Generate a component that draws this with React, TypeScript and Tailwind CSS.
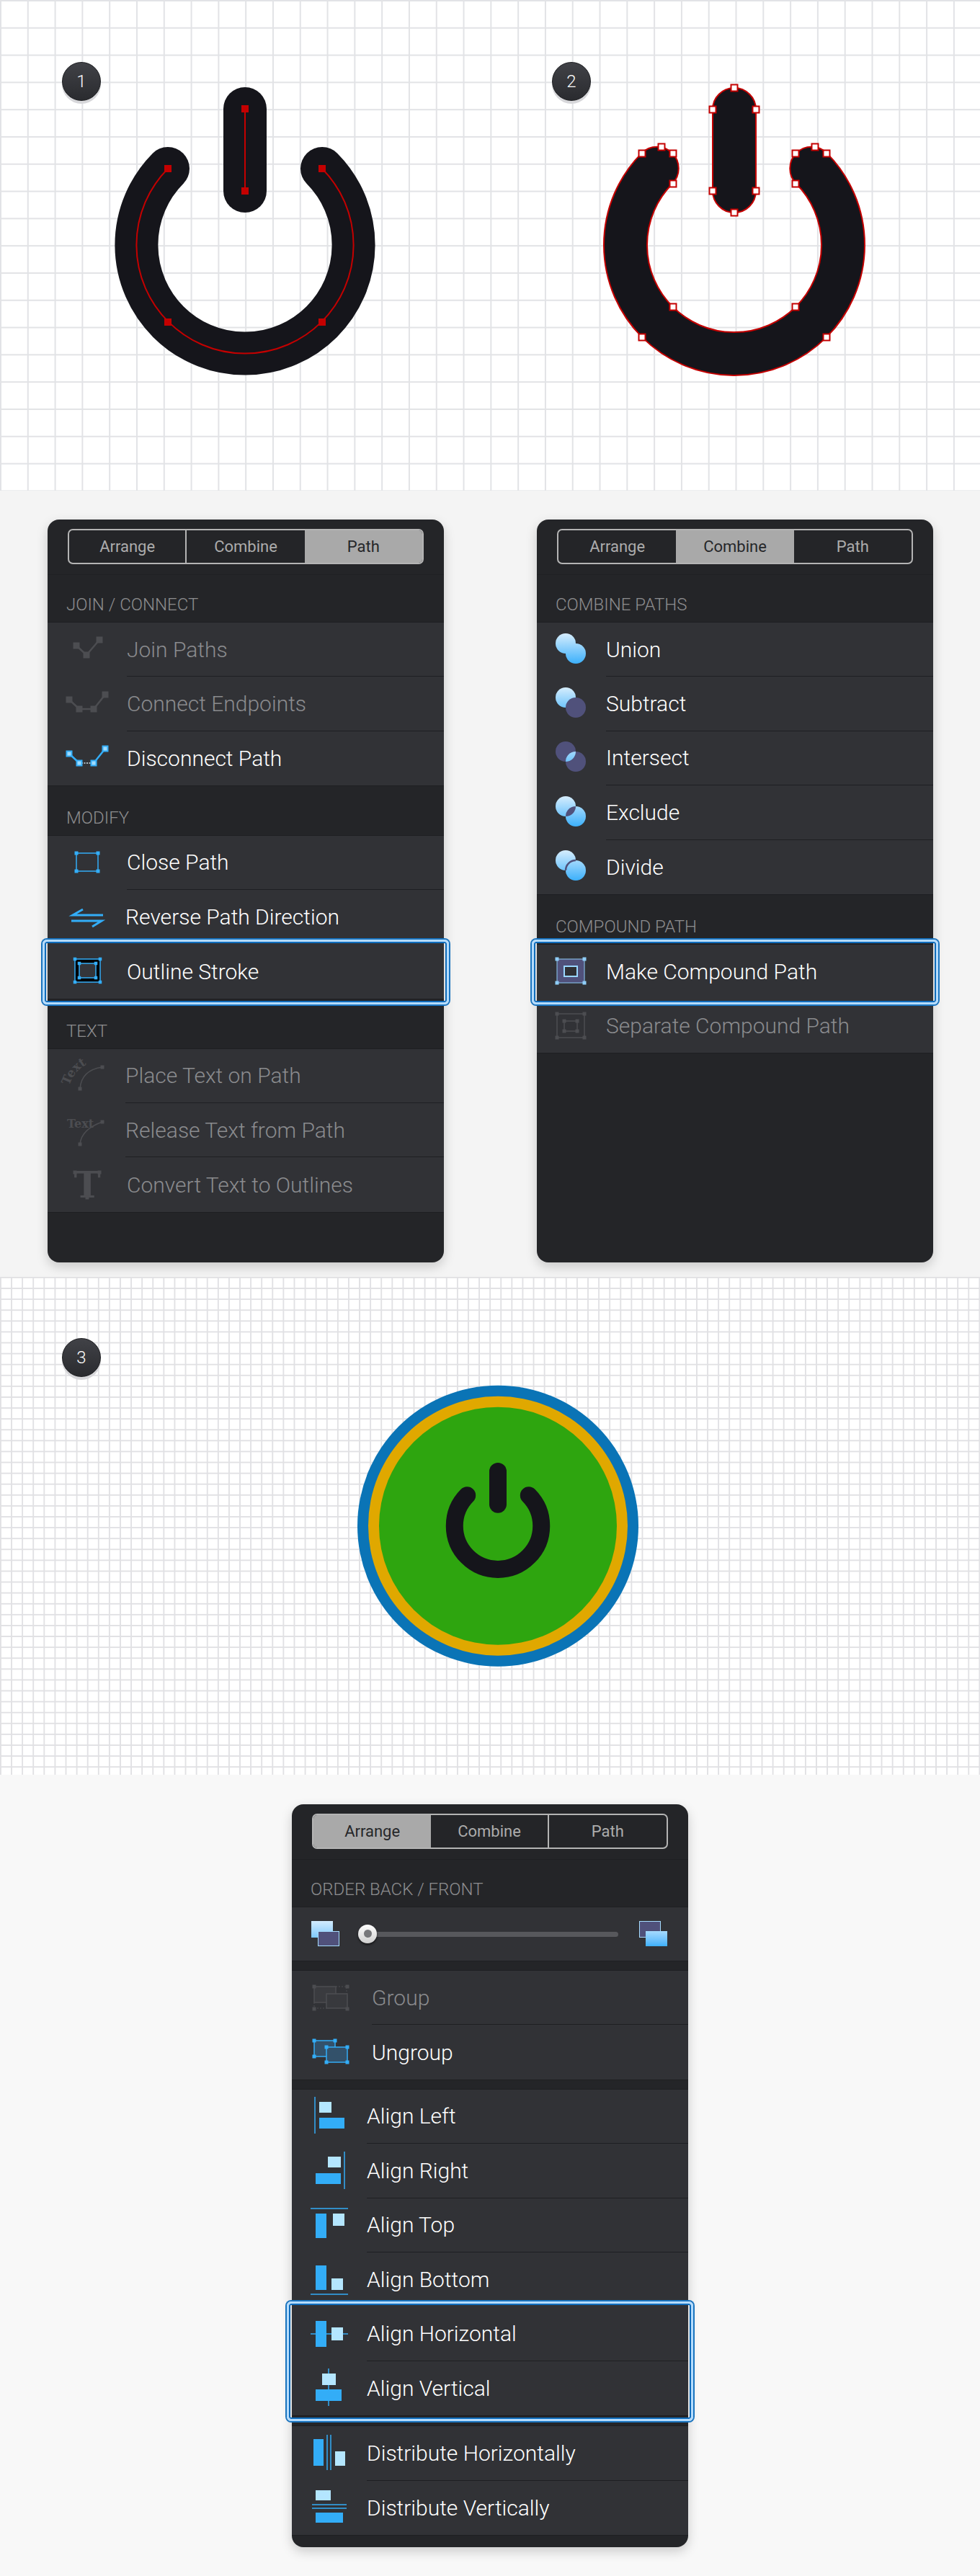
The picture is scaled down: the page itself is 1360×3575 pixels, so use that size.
import type { ReactNode } from 'react';

const BLUE = '#33adf7';
const PALE = '#b4e6ff';
const DIM = '#4c4d51';
const PURPLE = '#50517b';

function Sq({ x, y, s = 5, fill }: { x: number; y: number; s?: number; fill: string }) {
  return <rect x={x - s / 2} y={y - s / 2} width={s} height={s} fill={fill} />;
}

function Icon({ children }: { children: ReactNode }) {
  return (
    <svg viewBox="-36 -28 72 56" className="w-[72px] h-[56px] overflow-visible">
      {children}
    </svg>
  );
}

function Defs() {
  return (
    <svg className="absolute w-0 h-0">
      <defs>
        <linearGradient id="light" gradientUnits="userSpaceOnUse" x1="0" y1="-23" x2="0" y2="19">
          <stop offset="0" stopColor="#d6edfd" />
          <stop offset="1" stopColor="#3cb0fb" />
        </linearGradient>
        <clipPath id="clipA">
          <circle cx="-7" cy="-9" r="14" />
        </clipPath>
      </defs>
    </svg>
  );
}

function JoinIcon() {
  return (
    <Icon>
      <path d="M-15 -6 L-1 7 L17 -14" fill="none" stroke={DIM} strokeWidth="2.5" />
      <Sq x={-15} y={-6} s={9} fill={DIM} />
      <Sq x={-1} y={7} s={9} fill={DIM} />
      <Sq x={17} y={-14} s={9} fill={DIM} />
    </Icon>
  );
}

function ConnectIcon() {
  return (
    <Icon>
      <path d="M-25 -6 L-11 7 H9 L25 -13" fill="none" stroke={DIM} strokeWidth="2.5" />
      <Sq x={-25} y={-6} s={9} fill={DIM} />
      <Sq x={-11} y={7} s={9} fill={DIM} />
      <Sq x={9} y={7} s={9} fill={DIM} />
      <Sq x={25} y={-13} s={9} fill={DIM} />
    </Icon>
  );
}

function DisconnectIcon() {
  return (
    <Icon>
      <path d="M-25 -6 L-11 7 M9 7 L25 -13" fill="none" stroke={BLUE} strokeWidth="2.5" />
      <path d="M-8 7 H6" fill="none" stroke="#d5e7f2" strokeWidth="1.5" strokeDasharray="2 1.5" />
      {[[-25, -6], [-11, 7], [9, 7], [25, -13]].map(([x, y]) => (
        <g key={x}>
          <Sq x={x} y={y} s={9} fill={BLUE} />
          <Sq x={x} y={y} s={5} fill="#9fdcff" />
        </g>
      ))}
    </Icon>
  );
}

function ClosePathIcon() {
  return (
    <Icon>
      <rect x="-15" y="-13" width="30" height="25" fill="none" stroke={BLUE} strokeWidth="1.5" />
      <Sq x={-15} y={-13} fill={BLUE} />
      <Sq x={15} y={-13} fill={BLUE} />
      <Sq x={-15} y={12} fill={BLUE} />
      <Sq x={15} y={12} fill={BLUE} />
    </Icon>
  );
}

function ReverseIcon() {
  return (
    <Icon>
      <path d="M22 -3 H-20 L-6 -11 M-22 5 H20 L7 13" fill="none" stroke={BLUE} strokeWidth="3" />
    </Icon>
  );
}

function OutlineIcon() {
  return (
    <Icon>
      <rect x="-17" y="-17" width="35" height="32" fill="#000" stroke={BLUE} strokeWidth="1.5" />
      <rect x="-11" y="-11" width="23" height="20" fill="#34353a" stroke={BLUE} strokeWidth="1.5" />
      {[[-17, -17], [18, -17], [-17, 15], [18, 15], [-11, -11], [12, -11], [-11, 9], [12, 9]].map(([x, y]) => (
        <Sq key={`${x}${y}`} x={x} y={y} s={4.5} fill={BLUE} />
      ))}
    </Icon>
  );
}

function PlaceTextIcon() {
  return (
    <Icon>
      <path id="placeCurve" d="M-25 14 Q-17 -12 10 -20" fill="none" />
      <text fontFamily="DejaVu Serif" fontWeight="700" fontSize="17" fill={DIM}>
        <textPath href="#placeCurve">Text</textPath>
      </text>
      <path d="M-10 18 Q-8 -8 21 -12" fill="none" stroke={DIM} strokeWidth="1.5" />
      <Sq x={-10} y={18} fill={DIM} />
      <Sq x={21} y={-12} fill={DIM} />
    </Icon>
  );
}

function ReleaseTextIcon() {
  return (
    <Icon>
      <text x="-28" y="-4" fontFamily="DejaVu Serif" fontWeight="700" fontSize="16" fill={DIM}>
        Text
      </text>
      <path d="M-10 19 Q-8 -2 21 -12" fill="none" stroke={DIM} strokeWidth="1.5" />
      <Sq x={-10} y={19} fill={DIM} />
      <Sq x={21} y={-12} fill={DIM} />
    </Icon>
  );
}

function ConvertTextIcon() {
  return (
    <Icon>
      <text x="0" y="18" textAnchor="middle" fontFamily="DejaVu Serif" fontWeight="700" fontSize="50" fill={DIM}>
        T
      </text>
      <Sq x={-17} y={-17} fill={DIM} />
      <Sq x={17} y={-17} fill={DIM} />
      <Sq x={0} y={18} fill={DIM} />
    </Icon>
  );
}

function Circles({ a, b, lens, stroke }: { a: string; b: string; lens?: string; stroke?: string }) {
  return (
    <Icon>
      <circle cx="-7" cy="-9" r="14" fill={a} />
      <circle cx="7" cy="5" r="14" fill={b} />
      {lens && <circle cx="7" cy="5" r="14" fill={lens} stroke={stroke} strokeWidth="2.5" clipPath="url(#clipA)" />}
    </Icon>
  );
}

function CompoundIcon() {
  return (
    <Icon>
      <rect x="-19" y="-17" width="38" height="33" fill={PURPLE} stroke="#8fcdf8" strokeWidth="1" />
      <rect x="-9" y="-7" width="18" height="14" fill="#2f3034" stroke="#9ad6ff" strokeWidth="2" />
      {[[-19, -17], [19, -17], [-19, 16], [19, 16]].map(([x, y]) => (
        <Sq key={`${x}${y}`} x={x} y={y} fill="#8fcdf8" />
      ))}
    </Icon>
  );
}

function SeparateIcon() {
  return (
    <Icon>
      <rect x="-19" y="-17" width="38" height="33" fill="none" stroke={DIM} strokeWidth="1.5" />
      <rect x="-9" y="-7" width="18" height="14" fill="none" stroke={DIM} strokeWidth="1.5" />
      {[[-19, -17], [19, -17], [-19, 16], [19, 16], [-9, -7], [9, -7], [-9, 7], [9, 7]].map(([x, y]) => (
        <Sq key={`${x}${y}`} x={x} y={y} fill={DIM} />
      ))}
    </Icon>
  );
}

function GroupIcon() {
  return (
    <Icon>
      <rect x="-23" y="-16" width="30" height="22" fill="#3a3b3f" stroke={DIM} strokeWidth="1.5" />
      <rect x="-6" y="-6" width="29" height="20" fill="#38393d" stroke={DIM} strokeWidth="1.5" />
      <path d="M7 -16 H22 V-6 M-23 6 V14 H-6" fill="none" stroke={DIM} strokeWidth="1" strokeDasharray="2 2" />
      {[[-23, -16], [23, -16], [-23, 15], [23, 15]].map(([x, y]) => (
        <Sq key={`${x}${y}`} x={x} y={y} fill={DIM} />
      ))}
    </Icon>
  );
}

function UngroupIcon() {
  const nodes = [[-23, -16], [6, -16], [-23, 6], [-6, -7], [23, -7], [-6, 14], [23, 14]];
  return (
    <Icon>
      <rect x="-23" y="-16" width="29" height="22" fill="#33516a" stroke={BLUE} strokeWidth="1.5" />
      <rect x="-6" y="-7" width="29" height="21" fill="#33516a" stroke={BLUE} strokeWidth="1.5" />
      {nodes.map(([x, y]) => (
        <Sq key={`${x}${y}`} x={x} y={y} fill={BLUE} />
      ))}
    </Icon>
  );
}

function AlignIcon({ lines, dark, pale }: { lines: number[][]; dark: number[]; pale: number[] }) {
  return (
    <Icon>
      {lines.map(([x1, y1, x2, y2]) => (
        <line key={`${x1}${y1}`} x1={x1} y1={y1} x2={x2} y2={y2} stroke={BLUE} strokeWidth="1.5" />
      ))}
      <rect x={dark[0]} y={dark[1]} width={dark[2] - dark[0]} height={dark[3] - dark[1]} fill={BLUE} />
      <rect x={pale[0]} y={pale[1]} width={pale[2] - pale[0]} height={pale[3] - pale[1]} fill={PALE} />
    </Icon>
  );
}

function Tabs({ active }: { active: number }) {
  const names = ['Arrange', 'Combine', 'Path'];
  return (
    <div className="grid grid-cols-3 h-[49px] rounded-[7px] border-2 border-[#b4b4b4] overflow-hidden">
      {names.map((name, i) => (
        <div
          key={name}
          className={`flex items-center justify-center text-[22px] ${
            i === active ? 'bg-[#a9a9a9] text-[#26272a]' : 'text-[#acacac]'
          } ${i < 2 && i !== active && i + 1 !== active ? 'border-r-2 border-[#b4b4b4]' : ''}`}
        >
          {name}
        </div>
      ))}
    </div>
  );
}

function Heading({ children, tall }: { children: string; tall?: boolean }) {
  return (
    <div className={`flex items-end pl-[26px] pb-[11px] text-[24px] leading-[28px] font-light text-[#8d8d8f] ${tall ? 'h-[69.6px]' : 'h-[66px]'}`}>
      {children}
    </div>
  );
}

function Rows({ children }: { children: ReactNode }) {
  return <div className="bg-[#313236] shadow-[0_-1px_0_#1e1f22,0_1px_0_#1e1f22]">{children}</div>;
}

function Row({
  icon,
  label,
  off,
  last,
  col,
}: {
  icon: ReactNode;
  label: string;
  off?: boolean;
  last?: boolean;
  col: string;
}) {
  return (
    <div className="flex h-[75.4px]">
      <div className={`flex items-center shrink-0 ${col}`}>{icon}</div>
      <div
        className={`flex flex-1 items-center text-[30px] font-light ${off ? 'text-[#8a8b8e]' : 'text-white'} ${
          last ? '' : 'border-b border-[#1e1f22]'
        }`}
      >
        {label}
      </div>
    </div>
  );
}

function Highlight({ children }: { children: ReactNode }) {
  return (
    <div className="relative">
      {children}
      <div className="absolute -left-[7px] -right-[7px] -top-[7px] -bottom-[8px] rounded-[6px] border-[3px] border-[#b5dcfd] shadow-[0_0_0_2px_#1a74bf,inset_0_0_0_2px_#0f6cbb]" />
    </div>
  );
}

function Panel({ active, children }: { active: number; children: ReactNode }) {
  return (
    <div className="w-[550px] h-[1031px] rounded-[16px] bg-[#242528] shadow-[0_6px_16px_rgba(0,0,0,0.18)]">
      <div className="px-[28px] pt-[13px] pb-[14px] border-b border-[#1f2023]">
        <Tabs active={active} />
      </div>
      {children}
    </div>
  );
}

function Badge({ n, className }: { n: number; className: string }) {
  return (
    <div
      className={`absolute flex items-center justify-center w-[54px] h-[54px] rounded-full border border-[#1c1d20] bg-gradient-to-b from-[#414247] to-[#2a2b2f] text-[24px] font-light text-white shadow-[0_4px_0_#d7d7da] ${className}`}
    >
      {n}
    </div>
  );
}

function PowerStrokes() {
  return (
    <g fill="none" stroke="#15151b" strokeWidth="60" strokeLinecap="round">
      <path d="M-107 -106 A150.6 150.6 0 1 0 107 -106" />
      <path d="M0 -189 V-75" />
    </g>
  );
}

function PowerOne() {
  const nodes = [[0, -189], [0, -75], [-107, -106], [107, -106], [-107, 107], [107, 107]];
  return (
    <svg viewBox="0 0 680 680" className="w-[680px] h-[680px]">
      <g transform="translate(340 340)">
        <PowerStrokes />
        <path d="M-107 -106 A150.6 150.6 0 1 0 107 -106 M0 -189 V-75" fill="none" stroke="#c40000" strokeWidth="2" />
        {nodes.map(([x, y]) => (
          <Sq key={`${x}${y}`} x={x} y={y} s={10} fill="#c40000" />
        ))}
      </g>
    </svg>
  );
}

function PowerTwo() {
  const nodes = [
    [339, 122], [309, 152], [369, 152], [309, 265], [369, 265], [339, 295],
    [211, 213], [238, 204], [254, 213], [254, 255],
    [424, 213], [424, 255], [451, 204], [467, 213],
    [254, 426], [424, 426], [211, 468], [467, 468],
  ];
  return (
    <svg viewBox="0 0 680 680" className="w-[680px] h-[680px]">
      <g fill="#15151b" stroke="#c40000" strokeWidth="2">
        <path d="M210.4 212.6 A181 181 0 1 0 467.6 212.6 A30 30 0 0 0 425 255 A121 121 0 1 1 253 255 A30 30 0 0 0 210.4 212.6Z" />
        <rect x="309" y="122" width="60" height="173" rx="30" />
      </g>
      {nodes.map(([x, y]) => (
        <rect key={`${x}${y}`} x={x - 4.5} y={y - 4.5} width="9" height="9" fill="#fff" stroke="#c40000" strokeWidth="2" />
      ))}
    </svg>
  );
}

function Disc() {
  return (
    <svg viewBox="0 0 1360 691" className="w-[1360px] h-[691px]">
      <circle cx="691" cy="345.7" r="195" fill="#0a74b6" />
      <circle cx="691" cy="345.7" r="180" fill="#e0a800" />
      <circle cx="691" cy="345.7" r="165" fill="#2ea50f" />
      <g transform="translate(691 345.7) scale(0.4)">
        <PowerStrokes />
      </g>
    </svg>
  );
}

function Layers({ flip }: { flip?: boolean }) {
  return (
    <div className="relative w-[39px] h-[36px] shrink-0">
      <div
        className={`absolute left-0 top-0 w-[30px] h-[23px] ${
          flip ? 'bg-[#50517b] border border-[#a6dcff]' : 'bg-gradient-to-b from-[#d3ebfd] to-[#7cc8fb]'
        }`}
      />
      <div
        className={`absolute left-[9px] top-[14px] w-[30px] h-[21px] ${
          flip ? 'bg-gradient-to-b from-[#a5dafd] to-[#3cb0fb]' : 'bg-[#50517b] border border-[#a6dcff]'
        }`}
      />
    </div>
  );
}

function Slider() {
  return (
    <div className="flex items-center h-[74px] bg-[#313236] pl-[27px] pr-[29px] shadow-[0_-1px_0_#1e1f22,0_1px_0_#1e1f22]">
      <Layers />
      <div className="relative flex-1 h-[7px] ml-[27px] mr-[29px] rounded-full bg-[#57585c]">
        <div className="absolute -left-[1px] -top-[10px] flex items-center justify-center w-[26px] h-[26px] rounded-full bg-gradient-to-b from-white to-[#cfcfcf] shadow-[0_2px_3px_rgba(0,0,0,0.6)]">
          <div className="w-[11px] h-[11px] rounded-full bg-[#77787b]" />
        </div>
      </div>
      <Layers flip />
    </div>
  );
}

const gridBig =
  'bg-white bg-[linear-gradient(#e2e3e6_1.5px,transparent_1.5px),linear-gradient(90deg,#e2e3e6_1.5px,transparent_1.5px)] bg-[size:37.8px_37.8px]';
const gridSmall =
  'bg-white bg-[linear-gradient(#e1e1e4_2px,transparent_2px),linear-gradient(90deg,#e1e1e4_2px,transparent_2px)] bg-[size:15.1px_15.1px]';

export default function App() {
  const a = 'w-[110px] pl-[19px]';
  const a2 = 'w-[108px] pl-[19px]';
  const b = 'w-[96px] pl-[11px]';
  const c = 'w-[104px] pl-[16px]';
  const d = 'w-[111px] pl-[18px]';

  return (
    <div className="relative w-[1360px] h-[3575px] bg-[#f8f8f8] font-[Roboto,sans-serif]">
      <Defs />

      <section className={`grid grid-cols-2 h-[681px] ${gridBig}`}>
        <div className="relative">
          <Badge n={1} className="left-[86px] top-[86px]" />
          <PowerOne />
        </div>
        <div className="relative">
          <Badge n={2} className="left-[86px] top-[86px]" />
          <PowerTwo />
        </div>
      </section>

      <section className="flex gap-[129px] h-[1091px] pl-[66px] pt-[40px] bg-[#f4f4f4]">
        <Panel active={2}>
          <Heading>JOIN / CONNECT</Heading>
          <Rows>
            <Row col={a} off icon={<JoinIcon />} label="Join Paths" />
            <Row col={a} off icon={<ConnectIcon />} label="Connect Endpoints" />
            <Row col={a} last icon={<DisconnectIcon />} label="Disconnect Path" />
          </Rows>
          <Heading tall>MODIFY</Heading>
          <Rows>
            <Row col={a} icon={<ClosePathIcon />} label="Close Path" />
            <Row col={a2} last icon={<ReverseIcon />} label="Reverse Path Direction" />
            <Highlight>
              <Row col={a} last icon={<OutlineIcon />} label="Outline Stroke" />
            </Highlight>
          </Rows>
          <Heading tall>TEXT</Heading>
          <Rows>
            <Row col={a2} off icon={<PlaceTextIcon />} label="Place Text on Path" />
            <Row col={a2} off icon={<ReleaseTextIcon />} label="Release Text from Path" />
            <Row col={a} off last icon={<ConvertTextIcon />} label="Convert Text to Outlines" />
          </Rows>
        </Panel>

        <Panel active={1}>
          <Heading>COMBINE PATHS</Heading>
          <Rows>
            <Row col={b} icon={<Circles a="url(#light)" b="url(#light)" />} label="Union" />
            <Row col={b} icon={<Circles a="url(#light)" b={PURPLE} />} label="Subtract" />
            <Row col={b} icon={<Circles a={PURPLE} b={PURPLE} lens="url(#light)" />} label="Intersect" />
            <Row col={b} icon={<Circles a="url(#light)" b="url(#light)" lens={PURPLE} />} label="Exclude" />
            <Row col={b} last icon={<Circles a="url(#light)" b="url(#light)" lens="url(#light)" stroke={PURPLE} />} label="Divide" />
          </Rows>
          <Heading tall>COMPOUND PATH</Heading>
          <Rows>
            <Highlight>
              <Row col={b} last icon={<CompoundIcon />} label="Make Compound Path" />
            </Highlight>
            <Row col={b} off last icon={<SeparateIcon />} label="Separate Compound Path" />
          </Rows>
        </Panel>
      </section>

      <section className={`relative h-[691px] ${gridSmall}`}>
        <Badge n={3} className="left-[86px] top-[85px]" />
        <Disc />
      </section>

      <section className="flex justify-center pt-[41px]">
        <div className="w-[550px] h-[1031px] rounded-[16px] bg-[#242528] shadow-[0_6px_16px_rgba(0,0,0,0.18)]">
          <div className="px-[28px] pt-[13px] pb-[14px] border-b border-[#1f2023]">
            <Tabs active={0} />
          </div>
          <Heading>ORDER BACK / FRONT</Heading>
          <Slider />
          <div className="h-[14px]" />
          <Rows>
            <Row col={d} off icon={<GroupIcon />} label="Group" />
            <Row col={d} last icon={<UngroupIcon />} label="Ungroup" />
          </Rows>
          <div className="h-[14px]" />
          <Rows>
            <Row col={c} label="Align Left" icon={<AlignIcon lines={[[-20, -27, -20, 24]]} dark={[-14, 2, 21, 17]} pale={[-14, -20, 3, -5]} />} />
            <Row col={c} label="Align Right" icon={<AlignIcon lines={[[21, -27, 21, 25]]} dark={[-19, 3, 16, 18]} pale={[-2, -20, 16, -5]} />} />
            <Row col={c} label="Align Top" icon={<AlignIcon lines={[[-26, -23, 26, -23]]} dark={[-19, -16, -4, 18]} pale={[5, -16, 21, 1]} />} />
            <Row col={c} last label="Align Bottom" icon={<AlignIcon lines={[[-26, 20, 26, 20]]} dark={[-19, -20, -4, 14]} pale={[3, -2, 19, 14]} />} />
            <Highlight>
              <Row col={c} label="Align Horizontal" icon={<AlignIcon lines={[[-26, 0, 26, 0]]} dark={[-19, -18, -4, 18]} pale={[3, -9, 19, 9]} />} />
              <Row col={c} last label="Align Vertical" icon={<AlignIcon lines={[[-1, -27, -1, 25]]} dark={[-19, 2, 17, 18]} pale={[-10, -20, 9, -4]} />} />
            </Highlight>
          </Rows>
          <div className="h-[15px]" />
          <Rows>
            <Row col={c} label="Distribute Horizontally" icon={<AlignIcon lines={[[-3, -26, -3, 23], [2, -26, 2, 23]]} dark={[-22, -20, -8, 17]} pale={[8, -3, 22, 17]} />} />
            <Row col={c} last label="Distribute Vertically" icon={<AlignIcon lines={[[-24, -4, 24, -4], [-24, 1, 24, 1]]} dark={[-19, 7, 19, 21]} pale={[-19, -24, 2, -10]} />} />
          </Rows>
        </div>
      </section>
    </div>
  );
}
